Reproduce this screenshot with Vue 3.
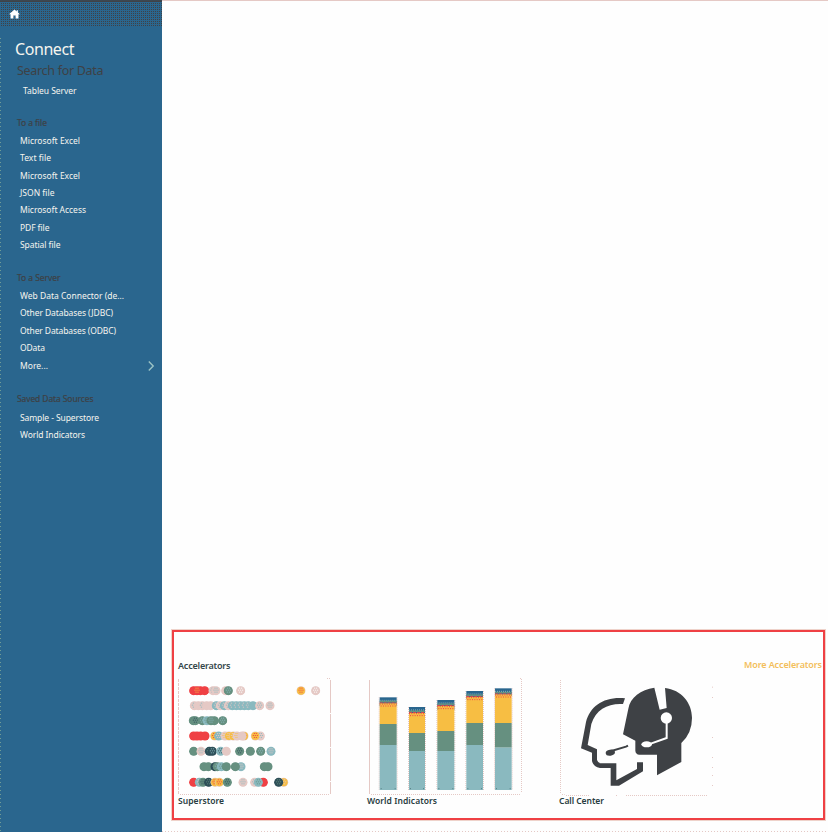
<script setup>
const groups = [
  { title: 'To a file', w: 30, cls: 'files', items: [['Microsoft Excel', 60], ['Text file', 31], ['Microsoft Excel', 60], ['JSON file', 34.5], ['Microsoft Access', 66], ['PDF file', 29.5], ['Spatial file', 40.5]] },
  { title: 'To a Server', w: 43.5, cls: 'servers', items: [['Web Data Connector (de...', 104], ['Other Databases (JDBC)', 93], ['Other Databases (ODBC)', 96], ['OData', 25], ['More...', 28]] },
  { title: 'Saved Data Sources', w: 76.5, cls: 'saved', items: [['Sample - Superstore', 79], ['World Indicators', 65]] },
]
// dot rows: y, then [x, base colour + optional speckle colour]
const rows = [
  [212, [[86, 'r'], [106, 'r'], [96, 'ry'], [119, 'r'], [144, 'pt'], [153, 'pt'], [182, 'p'], [190, 'gt'], [227, 'pw'], [408, 'yr'], [452, 'pw']]],
  [257, [[88, 'pt'], [100, 'p'], [112, 'pt'], [125, 'p'], [137, 'p'], [154, 'tp'], [166, 'pt'], [178, 'tp'], [190, 'pt'], [202, 'tp'], [214, 'tp'], [226, 'tp'], [238, 'tp'], [250, 'tp'], [264, 't'], [284, 'pt'], [315, 'pt']]],
  [302, [[85, 'gk'], [91, 'gk'], [112, 'gt'], [148, 'g'], [126, 'tg'], [138, 'gt'], [173, 'gt']]],
  [348, [[86, 'r'], [96, 'r'], [107, 'r'], [120, 'r'], [149, 'yr'], [161, 'tp'], [180, 'py'], [192, 'yp'], [205, 'yp'], [216, 'py'], [237, 'yr'], [231, 'p'], [286, 'pt'], [271, 'yr']]],
  [394, [[86, 'g'], [108, 'pt'], [133, 'kg'], [142, 'kt'], [167, 'tk'], [184, 'p'], [224, 'gk'], [256, 'g'], [287, 'gt'], [318, 'tp']]],
  [440, [[117, 'g'], [130, 'g'], [150, 'kg'], [157, 'gt'], [169, 'tg'], [184, 'g'], [228, 'tp'], [211, 'g'], [298, 'g'], [309, 'g']]],
  [487, [[86, 'r'], [103, 'tp'], [114, 'gk'], [131, 'kg'], [150, 'yr'], [163, 'yr'], [187, 'gk'], [234, 'pt'], [269, 'pt'], [295, 'r'], [280, 'tg'], [356, 'yp'], [341, 'kg']]],
]
const ink = { r: '#ef4044', p: '#e5c9c5', t: '#8ab9bf', g: '#669080', y: '#f7be43', k: '#2e4f58', w: '#ffffff' }
const bars = [
  { x: 59, w: 51, y: [67, 94, 147, 210] },
  { x: 147, w: 48, y: [96, 123, 174, 228] },
  { x: 232, w: 51, y: [75, 105, 168, 228] },
  { x: 319, w: 50, y: [48, 72, 144, 210] },
  { x: 405, w: 50, y: [40, 63, 144, 218] },
]
</script>

<template>
  <div class="screen">
    <aside class="sidebar">
      <header class="topbar">
        <svg class="home" viewBox="0 0 12 10"><path d="M6 0 0 5.4h1.7V10h3.1V6.7h2.4V10h3.1V5.4H12L9.7 3.3V.8H8.4v1.4z" fill="#fff" /></svg>
      </header>
      <h1><svg width="61" height="20"><text x="0" y="15" textLength="59.5">Connect</text></svg></h1>
      <h2><svg width="90" height="18"><text x="0" y="13" textLength="86.5">Search for Data</text></svg></h2>
      <div class="tableau"><svg width="58" height="14"><text x="0" y="10" textLength="53.5">Tableu Server</text></svg></div>
      <section v-for="g in groups" :key="g.title" :class="['group', g.cls]">
        <h3><svg width="90" height="14"><text x="0" y="10" :textLength="g.w">{{ g.title }}</text></svg></h3>
        <ul>
          <li v-for="(item, i) in g.items" :key="i">
            <svg width="112" height="14"><text x="0" y="10" :textLength="item[1]">{{ item[0] }}</text></svg>
            <svg v-if="item[0] === 'More...'" class="chevron" viewBox="0 0 6 10"><path d="M.8.6 5.2 5 .8 9.4" fill="none" stroke="#9bc3c5" stroke-width="1.4" /></svg>
          </li>
        </ul>
      </section>
    </aside>

    <main>
      <section class="accelerators">
        <div class="heading">
          <svg width="60" height="16"><text x="0" y="11" textLength="52.5">Accelerators</text></svg>
          <svg class="more" width="79" height="16"><text x="0" y="10" textLength="78">More Accelerators</text></svg>
        </div>
        <div class="cards">
          <article>
            <svg class="picture" viewBox="39 174 459 351">
              <path d="M40.500 177V522" class="edge loose" />
              <path d="M496.500 180V522" class="edge" stroke-dasharray="99 3" />
              <path d="M45 523.500H495M486 175.500h9" class="edge dots" />
              <g v-for="row in rows" :key="row[0]">
                <g v-for="(d, i) in row[1]" :key="i">
                  <circle :cx="d[0]" :cy="row[0]" r="13.500" :fill="ink[d[1][0] === 'y' ? 'p' : d[1][0]]" />
                  <circle :cx="d[0]" :cy="row[0]" r="12" :fill="ink[d[1][0]]" />
                  <path v-if="d[1][1]" :d="`M${d[0] - 4.5} ${row[0] - 7.500}h10M${d[0] - 7.500} ${row[0] - 1.500}h16M${d[0] - 4.500} ${row[0] + 4.500}h10`" :stroke="ink[d[1][1]]" stroke-width="3" stroke-dasharray="3 3" />
                </g>
              </g>
            </svg>
            <svg class="label" width="80" height="12"><text x="0" y="9" textLength="46">Superstore</text></svg>
          </article>
          <article>
            <svg class="picture" viewBox="27 9 459 351">
              <path d="M28.500 15V357" class="edge" />
              <path d="M484.500 12V354M33 358.500H480M480 10.500h3" class="edge dots" />
              <g v-for="b in bars" :key="b.x">
                <path :d="`M${b.x + b.w + 1.5} ${b.y[0]}V345M${b.x - 1.5} ${b.y[0]}V345`" class="edge dots" />
                <rect :x="b.x" :y="b.y[0]" :width="b.w" :height="b.y[1] - b.y[0]" fill="#2a668e" />
                <path :d="`M${b.x} ${b.y[0] + 9}h${b.w}`" stroke="#8ab9bf" stroke-width="3" stroke-dasharray="3 3" />
                <path :d="`M${b.x} ${b.y[0] + 13}h${b.w}`" stroke="#669080" stroke-width="5" />
                <path :d="`M${b.x} ${b.y[0] + 17}h${b.w}`" stroke="#ef4044" stroke-width="3" stroke-dasharray="9 3" />
                <rect :x="b.x" :y="b.y[0] + 18" :width="b.w" :height="b.y[2] - b.y[0] - 18" fill="#f7be43" />
                <path :d="`M${b.x} ${b.y[0] + 20}h${b.w}M${b.x + 3} ${b.y[0] + 26}h${b.w - 4}`" stroke="#ef4044" stroke-width="3" stroke-dasharray="3 4" />
                <rect :x="b.x" :y="b.y[2]" :width="b.w" :height="b.y[3] - b.y[2]" fill="#669080" />
                <rect :x="b.x" :y="b.y[3]" :width="b.w" :height="345 - b.y[3]" fill="#8ab9bf" />
                <path :d="`M${b.x + 3} 341h3M${b.x + b.w - 6} 341h3`" stroke="#557f84" stroke-width="3" />
              </g>
            </svg>
            <svg class="label second" width="90" height="12"><text x="0" y="9" textLength="70">World Indicators</text></svg>
          </article>
          <article>
            <svg class="picture" viewBox="30 24 459 351">
              <path d="M31.500 30V369" class="edge dots" />
              <path d="M36 373.500h8M48 376.500H120M198 376.500h3M228 376.500H474" class="edge dots" />
              <path d="M487.500 50v3M487.500 81v3M487.500 201v3M487.500 261v3M487.500 291v3M487.500 315v3M487.500 345v3" class="edge" />
              <path d="M225 85 219 102C176 99 138 117 124 162L113 225 141 238V270Q144 279 151 280H199V331L261 297V277H279V304L207 347H182V294H150Q130 291 126 273V248L93 235 108 156C121 107 163 79 225 85Z" fill="#3e4145" />
              <path d="M313 53 329 119 350 114 345 54C394 60 426 98 426 144Q426 190 394 219V276L321 316V254H268Q257 253 256 242V212L219 193 235 116C240 83 273 58 313 53Z" fill="#3e4145" />
              <circle cx="349" cy="144" r="17" fill="#fff" />
              <path d="M350 154V204L296 223" fill="none" stroke="#fff" stroke-width="6" />
              <ellipse cx="290" cy="223" rx="16" ry="9" fill="#fff" />
              <path d="M184 243 228 230 234 227" fill="none" stroke="#3e4145" stroke-width="6" />
              <ellipse cx="181" cy="248" rx="14" ry="9" fill="#3e4145" transform="rotate(-7 181 248)" />
            </svg>
            <svg class="label third" width="80" height="12"><text x="0" y="9" textLength="45">Call Center</text></svg>
          </article>
        </div>
      </section>
    </main>
  </div>
</template>

<style>
body { background: #fefefe; }
</style>

<style scoped>
* { box-sizing: border-box; }
.screen { display: flex; width: 828px; height: 832px; font-family: "Noto Sans", "Open Sans", sans-serif; background: #fefefe; overflow: hidden; }
svg { display: block; overflow: visible; flex: none; }
h1, h2, h3, ul { margin: 0; padding: 0; font-weight: 400; list-style: none; }
.sidebar { width: 162px; height: 832px; background: repeating-linear-gradient(#6f9b96 0 1px, #2a668e 1px 4px) 0 38px / 1px 100% no-repeat #2a668e; fill: #f6f5ee; font-size: 8.500px; }
.topbar { height: 26px; padding: 8px 0 0 9px; border-top: 1px solid #3c4750; background: conic-gradient(#404246 25%, transparent 0) 0 0 / 2px 2px, linear-gradient(#404246, #404246) 0 0 / 100% 1px no-repeat #2a668e; }
.home { width: 11px; height: 10px; }
h1 { padding: 14px 0 0 15px; height: 36px; font-size: 16px; }
h2 { height: 22px; padding: 0 0 0 16.500px; font-size: 12.500px; fill: #3e4145; }
.tableau { height: 32px; padding: 0 0 0 23px; }
.group h3 { height: 16px; padding-left: 16.500px; font-size: 8.500px; fill: #3e4145; stroke: #3e4145; stroke-width: .2px; }
.group ul { padding-left: 20px; }
.group li { display: flex; align-items: center; height: 17.450px; }
.files { height: 155px; }
.servers { height: 121px; }
.group.servers h3 { height: 16px; }
.group.servers li { height: 17.500px; }
.group.saved h3 { height: 17px; }
.chevron { width: 6px; height: 10px; margin-left: 16px; }
main { width: 666px; height: 832px; padding: 629px 3px 0 10px; border-top: 1px solid #e5c9c5; background: repeating-linear-gradient(90deg, #e5c9c5 0 1px, transparent 1px 3px) 0 100% / 100% 1px no-repeat; }
.accelerators { width: 653px; height: 190px; padding: 26px 0 0 4px; border: 2px solid #ef4044; box-shadow: 0 0 0 1px #eed2ca; }
.heading { display: flex; justify-content: space-between; height: 20px; font-size: 9px; font-weight: 600; fill: #34474a; }
.more { fill: #f3be5b; font-weight: 600; }
.cards { display: flex; gap: 38px; fill: #283c40; font-size: 8.500px; font-weight: 600; }
article { width: 153px; }
.picture { width: 153px; height: 117px; }
.second { margin-left: -2px; }
.third { margin-left: -1px; }
.edge { fill: none; stroke: #e5c9c5; stroke-width: 3; }
.dots { stroke-dasharray: 3 3; }
.loose { stroke-dasharray: 9 3; }
</style>
